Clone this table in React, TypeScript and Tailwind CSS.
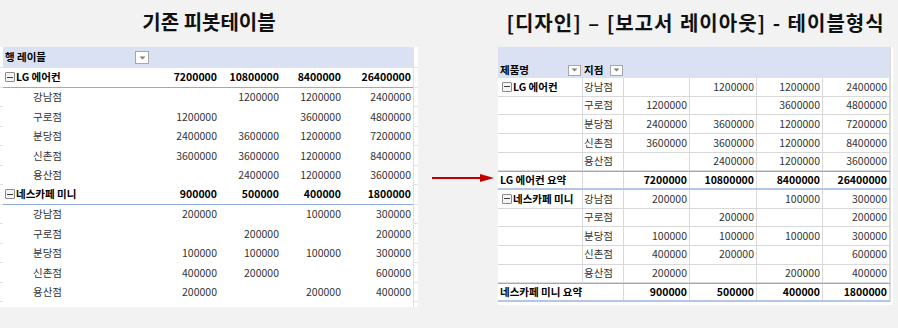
import React from "react";

type Val = number | "";

const groups: { name: string; total: Val[]; rows: { name: string; vals: Val[] }[] }[] = [
  {
    name: "LG 에어컨",
    total: [7200000, 10800000, 8400000, 26400000],
    rows: [
      { name: "강남점", vals: ["", 1200000, 1200000, 2400000] },
      { name: "구로점", vals: [1200000, "", 3600000, 4800000] },
      { name: "분당점", vals: [2400000, 3600000, 1200000, 7200000] },
      { name: "신촌점", vals: [3600000, 3600000, 1200000, 8400000] },
      { name: "용산점", vals: ["", 2400000, 1200000, 3600000] },
    ],
  },
  {
    name: "네스카페 미니",
    total: [900000, 500000, 400000, 1800000],
    rows: [
      { name: "강남점", vals: [200000, "", 100000, 300000] },
      { name: "구로점", vals: ["", 200000, "", 200000] },
      { name: "분당점", vals: [100000, 100000, 100000, 300000] },
      { name: "신촌점", vals: [400000, 200000, "", 600000] },
      { name: "용산점", vals: [200000, "", 200000, 400000] },
    ],
  },
];

const leftCols = ["w-[64px]", "w-[62px]", "w-[62px]", "w-[70px]"];
const rightCols = ["w-[66px]", "w-[67px]", "w-[66px]", "w-[67px]"];

function Dropdown({ className }: { className: string }) {
  return (
    <span className={`flex items-center justify-center border border-[#a6a6a6] bg-white ${className}`}>
      <svg width="7" height="4" viewBox="0 0 7 4">
        <path d="M0.5 0.5 L6.5 0.5 L3.5 3.5 Z" fill="#7f7f7f" />
      </svg>
    </span>
  );
}

function Collapse() {
  return (
    <span className="mr-[1px] flex h-[10px] w-[10px] shrink-0 items-center justify-center rounded-[1px] border border-[#8c8c8c] bg-[#f4f4f4]">
      <span className="h-px w-[6px] bg-[#404040]" />
    </span>
  );
}

function LeftRow({ children, bold, line }: { children: React.ReactNode; bold?: boolean; line?: boolean }) {
  return (
    <div className="flex h-[19.5px]">
      <div className="w-[3px] border-b border-[#e1e1e1]" />
      <div
        className={`flex w-[410px] items-center ${bold ? "font-bold text-black" : "text-[#333]"} ${
          line ? "border-b border-[#8eaadb]" : ""
        }`}
      >
        {children}
      </div>
      <div className="w-[5px] border-l border-b border-[#e1e1e1]" />
    </div>
  );
}

function LeftTable() {
  return (
    <div className="flex flex-col bg-white">
      <div className="flex h-[21px]">
        <div className="w-[3px] border-b border-[#e1e1e1]" />
        <div className="flex w-[410px] items-center bg-[#d9e1f2]">
          <div className="flex w-[152px] items-center justify-between pl-[2px] pr-[6px] font-bold text-black">
            <span>행 레이블</span>
            <Dropdown className="h-[13px] w-[14px]" />
          </div>
        </div>
        <div className="w-[5px] border-l border-b border-[#e1e1e1]" />
      </div>
      {groups.map((g) => (
        <React.Fragment key={g.name}>
          <LeftRow bold line>
            <div className="flex w-[152px] items-center pl-[2px]">
              <Collapse />
              <span>{g.name}</span>
            </div>
            {g.total.map((v, i) => (
              <div key={i} className={`${leftCols[i]} pr-[2px] text-right`}>
                {v}
              </div>
            ))}
          </LeftRow>
          {g.rows.map((r) => (
            <LeftRow key={r.name}>
              <div className="w-[152px] pl-[30px]">{r.name}</div>
              {r.vals.map((v, i) => (
                <div key={i} className={`${leftCols[i]} pr-[2px] text-right`}>
                  {v}
                </div>
              ))}
            </LeftRow>
          ))}
        </React.Fragment>
      ))}
      <div className="flex h-[5px]">
        <div className="w-[413px]" />
        <div className="w-[5px] border-l border-[#e1e1e1]" />
      </div>
    </div>
  );
}

const cell = "flex h-full items-center border-r border-[#d9d9d9]";

function RightTable() {
  return (
    <div className="flex flex-col bg-white">
      <div className="flex h-[31px]">
        <div className="flex w-[392px] flex-col bg-[#d9e1f2]">
          <div className="h-[15px]" />
          <div className="flex h-[16px] items-center font-bold text-black">
            <div className="flex w-[85px] items-center justify-between pl-[2px] pr-[2px]">
              <span>제품명</span>
              <Dropdown className="h-[11px] w-[13px]" />
            </div>
            <div className="flex w-[41px] items-center justify-between pl-[1px] pr-[1px]">
              <span>지점</span>
              <Dropdown className="h-[11px] w-[13px]" />
            </div>
          </div>
        </div>
        <div className="w-[3px] border-l border-[#d9d9d9]" />
      </div>
      {groups.map((g) => (
        <React.Fragment key={g.name}>
          {g.rows.map((r, ri) => (
            <div key={r.name} className="flex h-[18.67px]">
              <div className="flex w-[392px] border-b border-[#d9d9d9] text-[#333]">
                <div className={`${cell} w-[85px] pl-[4px] font-bold text-black`}>
                  {ri === 0 && (
                    <>
                      <Collapse />
                      <span>{g.name}</span>
                    </>
                  )}
                </div>
                <div className={`${cell} w-[41px] pl-[1px]`}>{r.name}</div>
                {r.vals.map((v, i) => (
                  <div key={i} className={`${cell} ${rightCols[i]} justify-end pr-[2px]`}>
                    {v}
                  </div>
                ))}
              </div>
              <div className="w-[3px] border-l border-[#d9d9d9]" />
            </div>
          ))}
          <div className="flex h-[18.67px]">
            <div className="flex w-[392px] border-t border-b-2 border-t-[#8eaadb] border-b-[#b4c6e7] font-bold text-black">
              {g.name === "LG 에어컨" ? (
                <>
                  <div className={`${cell} w-[85px] whitespace-nowrap pl-[2px]`}>{g.name} 요약</div>
                  <div className={`${cell} w-[41px]`} />
                </>
              ) : (
                <div className={`${cell} w-[126px] whitespace-nowrap pl-[2px]`}>{g.name} 요약</div>
              )}
              {g.total.map((v, i) => (
                <div key={i} className={`${cell} ${rightCols[i]} justify-end pr-[2px]`}>
                  {v}
                </div>
              ))}
            </div>
            <div className="w-[3px] border-l border-[#d9d9d9]" />
          </div>
        </React.Fragment>
      ))}
      <div className="h-[3px]" />
    </div>
  );
}

export default function App() {
  return (
    <div className="flex h-[328px] w-[898px] bg-[#f2f2f2] font-['Noto_Sans_CJK_KR',sans-serif] text-[10.5px] leading-none">
      <div className="flex w-[418px] flex-col">
        <div className="flex h-[47px] items-center justify-center pb-[3px] text-[20px] font-bold text-[#111]">
          기존 피봇테이블
        </div>
        <LeftTable />
      </div>

      <div className="w-[80px] pt-[173px] pl-[14px]">
        <svg width="62" height="10" viewBox="0 0 62 10">
          <line x1="0" y1="5" x2="50" y2="5" stroke="#c00000" strokeWidth="2" />
          <path d="M48 1 L62 5 L48 9 Z" fill="#c00000" />
        </svg>
      </div>

      <div className="flex w-[395px] flex-col">
        <div className="flex h-[47px] items-center justify-center whitespace-nowrap pb-[2px] text-[20px] font-bold text-[#111]">
          <span className="tracking-[1px] [word-spacing:1px]">[디자인] – [보고서 레이아웃] - 테이블형식</span>
        </div>
        <RightTable />
      </div>
    </div>
  );
}
